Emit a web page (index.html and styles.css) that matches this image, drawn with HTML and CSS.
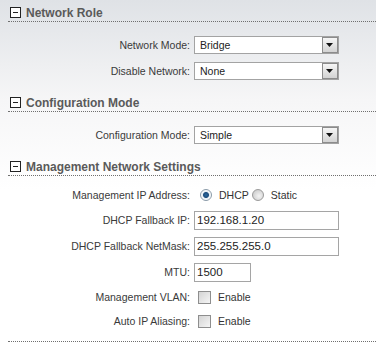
FILE: index.html
```html
<!DOCTYPE html>
<html lang="en">
<head>
    <meta charset="UTF-8">
    <meta name="viewport" content="width=device-width, initial-scale=1.0">
    <title>Network Settings</title>
    <link rel="stylesheet" href="styles.css">
</head>
<body>
    <div class="page">
        <div class="group">
            <div class="group-title">
                <svg class="toggle" width="11" height="11" viewBox="0 0 11 11"><rect x="0.5" y="0.5" width="10" height="10" fill="#fff" stroke="#222"/><path d="M3 5.5h5" stroke="#222"/></svg>
                Network Role
            </div>
            <div class="fields">
                <div class="row">
                    <label class="label">Network Mode:</label>
                    <div class="select"><span class="select-value">Bridge</span><span class="select-arrow"><svg width="8" height="5" viewBox="0 0 8 5"><path d="M0 0h7l-3.5 4z" fill="#111"/></svg></span></div>
                </div>
                <div class="row">
                    <label class="label">Disable Network:</label>
                    <div class="select"><span class="select-value">None</span><span class="select-arrow"><svg width="8" height="5" viewBox="0 0 8 5"><path d="M0 0h7l-3.5 4z" fill="#111"/></svg></span></div>
                </div>
            </div>
        </div>

        <div class="group">
            <div class="group-title">
                <svg class="toggle" width="11" height="11" viewBox="0 0 11 11"><rect x="0.5" y="0.5" width="10" height="10" fill="#fff" stroke="#222"/><path d="M3 5.5h5" stroke="#222"/></svg>
                Configuration Mode
            </div>
            <div class="fields">
                <div class="row">
                    <label class="label">Configuration Mode:</label>
                    <div class="select"><span class="select-value">Simple</span><span class="select-arrow"><svg width="8" height="5" viewBox="0 0 8 5"><path d="M0 0h7l-3.5 4z" fill="#111"/></svg></span></div>
                </div>
            </div>
        </div>

        <div class="group">
            <div class="group-title">
                <svg class="toggle" width="11" height="11" viewBox="0 0 11 11"><rect x="0.5" y="0.5" width="10" height="10" fill="#fff" stroke="#222"/><path d="M3 5.5h5" stroke="#222"/></svg>
                Management Network Settings
            </div>
            <div class="fields fields-last">
                <div class="row row-short">
                    <label class="label">Management IP Address:</label>
                    <div class="choice">
                        <input type="radio" name="ipmode" class="radio" checked><span class="choice-text">DHCP</span>
                        <input type="radio" name="ipmode" class="radio radio-next"><span class="choice-text">Static</span>
                    </div>
                </div>
                <div class="row">
                    <label class="label">DHCP Fallback IP:</label>
                    <div><input type="text" class="text-input" value="192.168.1.20"></div>
                </div>
                <div class="row">
                    <label class="label">DHCP Fallback NetMask:</label>
                    <div><input type="text" class="text-input" value="255.255.255.0"></div>
                </div>
                <div class="row">
                    <label class="label">MTU:</label>
                    <div><input type="text" class="text-input text-input-small" value="1500"></div>
                </div>
                <div class="row row-short">
                    <label class="label">Management VLAN:</label>
                    <div class="choice"><input type="checkbox" class="check"><span class="choice-text">Enable</span></div>
                </div>
                <div class="row row-short">
                    <label class="label">Auto IP Aliasing:</label>
                    <div class="choice"><input type="checkbox" class="check"><span class="choice-text">Enable</span></div>
                </div>
            </div>
        </div>
    </div>
</body>
</html>
```

FILE: styles.css
```css
html {
    background: #fff;
}
body {
    margin: 0;
    min-height: 345px;
    font-family: "Liberation Sans", Arial, sans-serif;
    font-size: 10.5px;
    color: #3a3a3a;
    background: linear-gradient(#dfe2e6 0, #f6f6f7 100px, #fff 190px) no-repeat;
}
.page {
    padding-left: 8px;
}
.group-title {
    display: flex;
    align-items: center;
    height: 17px;
    padding-top: 4px;
    border-bottom: 1px dotted #6f6f6f;
    font-size: 12px;
    font-weight: bold;
    color: #5a5a5a;
}
.toggle {
    margin: 0 5px 0 2px;
    flex: none;
}
.fields {
    padding: 10px 0 6px;
}
.fields-last {
    padding: 7px 0 8px;
    border-bottom: 1px dotted #6f6f6f;
}
.row {
    display: grid;
    grid-template-columns: 182px auto;
    column-gap: 4px;
    align-items: center;
    height: 26px;
}
.row-short {
    height: 24px;
}
.label {
    text-align: right;
}
.select {
    display: flex;
    align-items: center;
    width: 145px;
    height: 18px;
    box-sizing: border-box;
    border: 1px solid #a3a3a3;
    background: #fff;
    color: #222;
}
.select-value {
    flex: 1;
    padding-left: 5px;
}
.select-arrow {
    display: flex;
    align-items: center;
    justify-content: center;
    width: 16px;
    height: 16px;
    box-sizing: border-box;
    border: 1px solid #8c8c8c;
    background: linear-gradient(#f6f6f6, #d3d3d3);
}
.text-input {
    display: block;
    width: 145px;
    height: 19px;
    box-sizing: border-box;
    margin: 0;
    padding: 0 2px;
    border: 1px solid #a5a5a5;
    background: #fff;
    font-family: inherit;
    font-size: 11.5px;
    color: #222;
}
.text-input-small {
    width: 57px;
}
.choice {
    display: flex;
    align-items: center;
}
.radio {
    appearance: none;
    width: 12px;
    height: 12px;
    margin: 0 7px 0 6px;
    border: 1px solid #9a9a9a;
    border-radius: 50%;
    box-sizing: border-box;
    background: radial-gradient(circle at 60% 60%, #f4f4f4 0, #d2d2d2 70%);
}
.radio:checked {
    border-color: #8a9aa8;
    background: radial-gradient(circle, #2c6aa0 0, #1d4d7c 2.5px, #e8eef3 3.5px, #fff 5px);
}
.radio-next {
    margin-left: 3px;
}
.check {
    appearance: none;
    width: 13px;
    height: 13px;
    margin: 0 7px 0 4px;
    border: 1px solid #8e8e8e;
    box-sizing: border-box;
    background: linear-gradient(135deg, #d4d4d4, #f5f5f5);
}
.choice-text {
    color: #333;
}
```
